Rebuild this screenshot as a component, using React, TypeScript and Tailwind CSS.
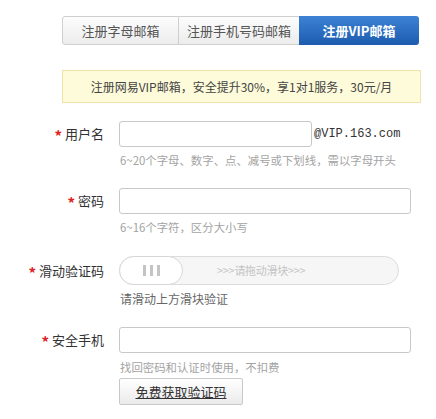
import React from 'react';

const cjk = '"Noto Sans CJK SC", "Liberation Sans", sans-serif';

function Label({ text }: { text: string }) {
  return (
    <div className="w-[104px] flex justify-end items-center text-[13px] text-[#333]">
      <span className="text-[#d22] mr-[3px] text-[15px] font-bold leading-none mt-[3px]">*</span>
      {text}
    </div>
  );
}

function Hint({ text, dark }: { text: string; dark?: boolean }) {
  return (
    <div className={`ml-[120px] leading-[18px] ${dark ? 'text-[12px] text-[#666]' : 'text-[11.4px] text-[#a3a3a3]'}`}>{text}</div>
  );
}

export default function App() {
  return (
    <div className="w-[436px] h-[419px] bg-white overflow-hidden pt-4" style={{ fontFamily: cjk }}>
      {/* tabs */}
      <div className="ml-[62px] flex h-[29px] w-[357px] text-[13px]">
        <div className="w-[117px] flex items-center justify-center border border-[#cfcfcf] rounded-l-[3px] bg-gradient-to-b from-[#fdfdfd] to-[#ececec] text-[#555]">
          注册字母邮箱
        </div>
        <div className="w-[120px] flex items-center justify-center border-y border-[#cfcfcf] bg-gradient-to-b from-[#fdfdfd] to-[#ececec] text-[#555]">
          注册手机号码邮箱
        </div>
        <div className="w-[120px] flex items-center justify-center rounded-r-[3px] bg-gradient-to-b from-[#3c82d4] to-[#1d5caf] text-white font-bold">
          注册VIP邮箱
        </div>
      </div>

      {/* banner */}
      <div className="mt-[25px] ml-[62px] w-[359px] h-[33px] border border-[#f0e2a8] bg-[#fdfbd9] flex items-center justify-center text-[12px] text-[#444]">
        注册网易VIP邮箱，安全提升30%，享1对1服务，30元/月
      </div>

      {/* username */}
      <div className="mt-[18px] flex items-center h-[26px]">
        <Label text="用户名" />
        <div className="ml-[15px] w-[193px] h-[26px] border border-[#c8c8c8] rounded-[3px]" />
        <span className="ml-[2px] text-[12px] text-[#333]" style={{ fontFamily: '"Liberation Mono", monospace' }}>
          @VIP.163.com
        </span>
      </div>
      <div className="mt-1">
        <Hint text="6~20个字母、数字、点、减号或下划线，需以字母开头" />
      </div>

      {/* password */}
      <div className="mt-[19px] flex items-center h-[26px]">
        <Label text="密码" />
        <div className="ml-[15px] w-[292px] h-[26px] border border-[#c8c8c8] rounded-[3px]" />
      </div>
      <div className="mt-1">
        <Hint text="6~16个字符，区分大小写" />
      </div>

      {/* slider */}
      <div className="mt-[20px] flex items-center h-[29px]">
        <Label text="滑动验证码" />
        <div className="ml-[15px] w-[280px] h-[29px] rounded-full border border-[#dcdcdc] bg-[#f6f6f6] flex items-center">
          <div className="w-[64px] h-[29px] -ml-px rounded-full border border-[#d6d6d6] bg-white flex items-center justify-center gap-[4px]">
            <span className="w-[3px] h-[11px] bg-[#c4c4c4]" />
            <span className="w-[3px] h-[11px] bg-[#c4c4c4]" />
            <span className="w-[3px] h-[11px] bg-[#c4c4c4]" />
          </div>
          <span className="ml-[34px] text-[11px] tracking-[-0.3px] text-[#c4c4c4]">&gt;&gt;&gt;请拖动滑块&gt;&gt;&gt;</span>
        </div>
      </div>
      <div className="mt-[5px]">
        <Hint text="请滑动上方滑块验证" dark />
      </div>

      {/* phone */}
      <div className="mt-[19px] flex items-center h-[26px]">
        <Label text="安全手机" />
        <div className="ml-[15px] w-[292px] h-[26px] border border-[#c8c8c8] rounded-[3px]" />
      </div>
      <div className="mt-[5px]">
        <Hint text="找回密码和认证时使用，不扣费" />
      </div>
      <div className="mt-[2px] ml-[119px] w-[124px] h-[27px] border border-[#c8c8c8] rounded-[2px] bg-gradient-to-b from-white to-[#ebebeb] flex items-center justify-center text-[13px] text-[#333] underline">
        免费获取验证码
      </div>
    </div>
  );
}
